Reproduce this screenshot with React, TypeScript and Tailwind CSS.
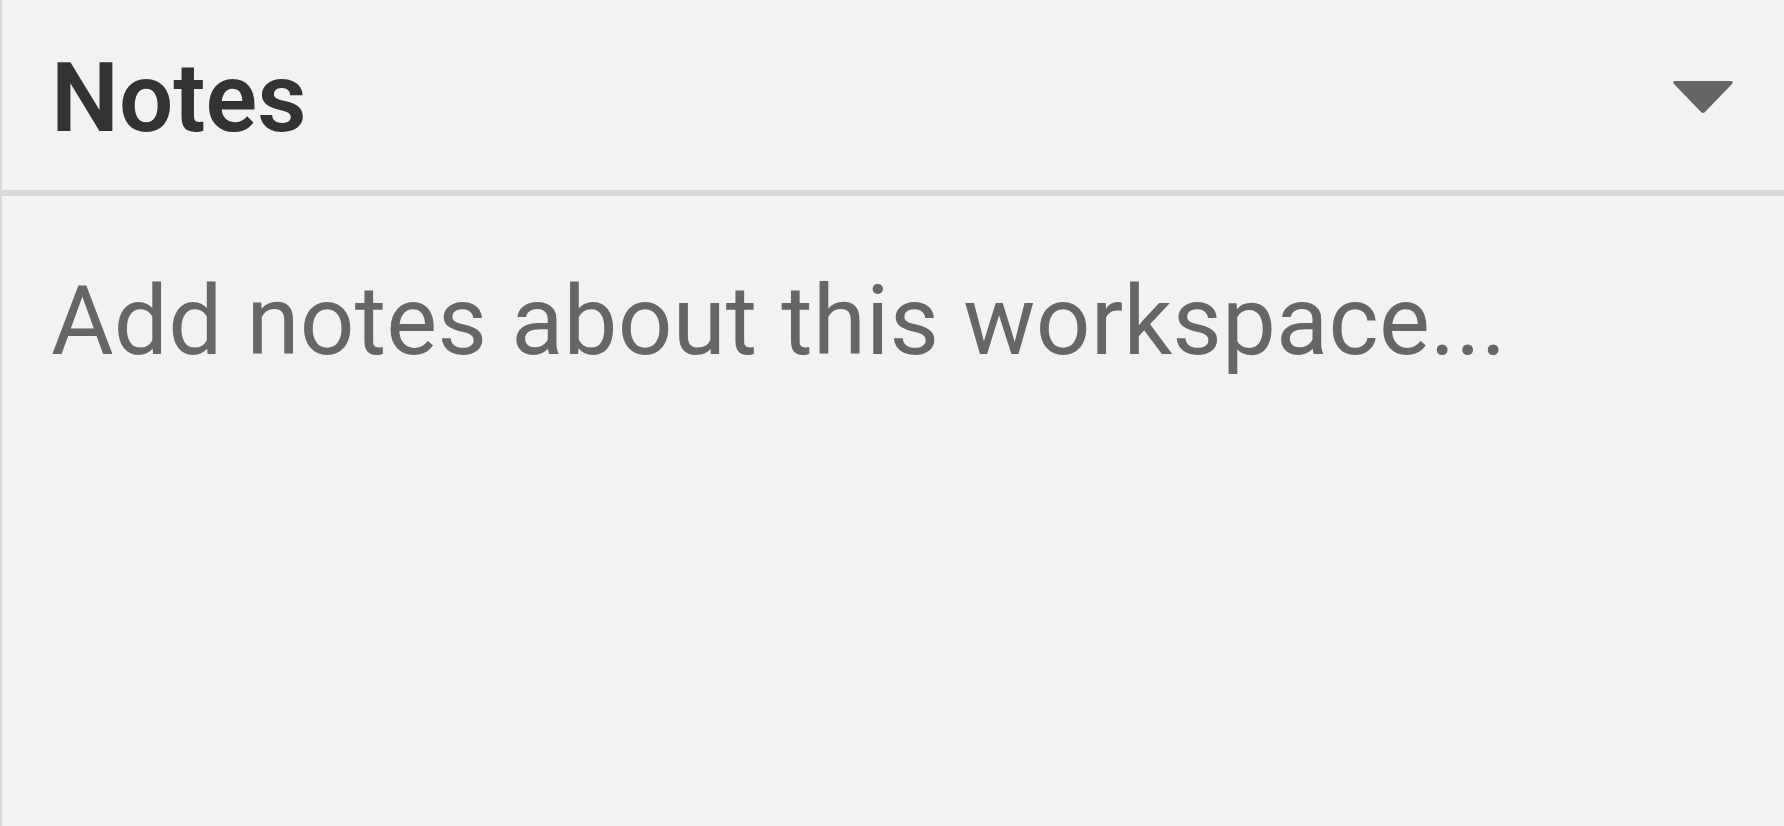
import { useState } from "react";

function Caret() {
  return (
    <svg width="62" height="34" viewBox="0 0 62 34" aria-hidden="true">
      <path
        d="M3 0 H59 Q62 0 60 3 L33 31 Q31 33 29 31 L2 3 Q0 0 3 0 Z"
        fill="#666666"
      />
    </svg>
  );
}

export default function App() {
  const [notes, setNotes] = useState("");
  const [open, setOpen] = useState(true);

  return (
    <div className="flex h-screen w-full flex-col border-l-2 border-[#d8d8d8] bg-[#f2f2f2] font-['Roboto',sans-serif]">
      {/* Panel header */}
      <div className="flex h-[190px] shrink-0 items-center justify-between pl-[49px] pr-[50px] pt-[6px]">
        <h2 className="text-[96px] font-semibold leading-none tracking-[0px] text-[#333333]">
          Notes
        </h2>
        <button
          type="button"
          onClick={() => setOpen(!open)}
          className="flex items-center"
        >
          <Caret />
        </button>
      </div>
      <div className="h-[6px] shrink-0 bg-[#d8d8d8]" />

      {/* Notes body */}
      {open && (
        <textarea
          value={notes}
          onChange={(e) => setNotes(e.target.value)}
          placeholder="Add notes about this workspace..."
          className="flex-1 resize-none bg-transparent pl-[49px] pt-[77px] text-[96px] leading-none tracking-[0.2px] text-[#333333] outline-none placeholder:text-[#666666]"
        />
      )}
    </div>
  );
}
